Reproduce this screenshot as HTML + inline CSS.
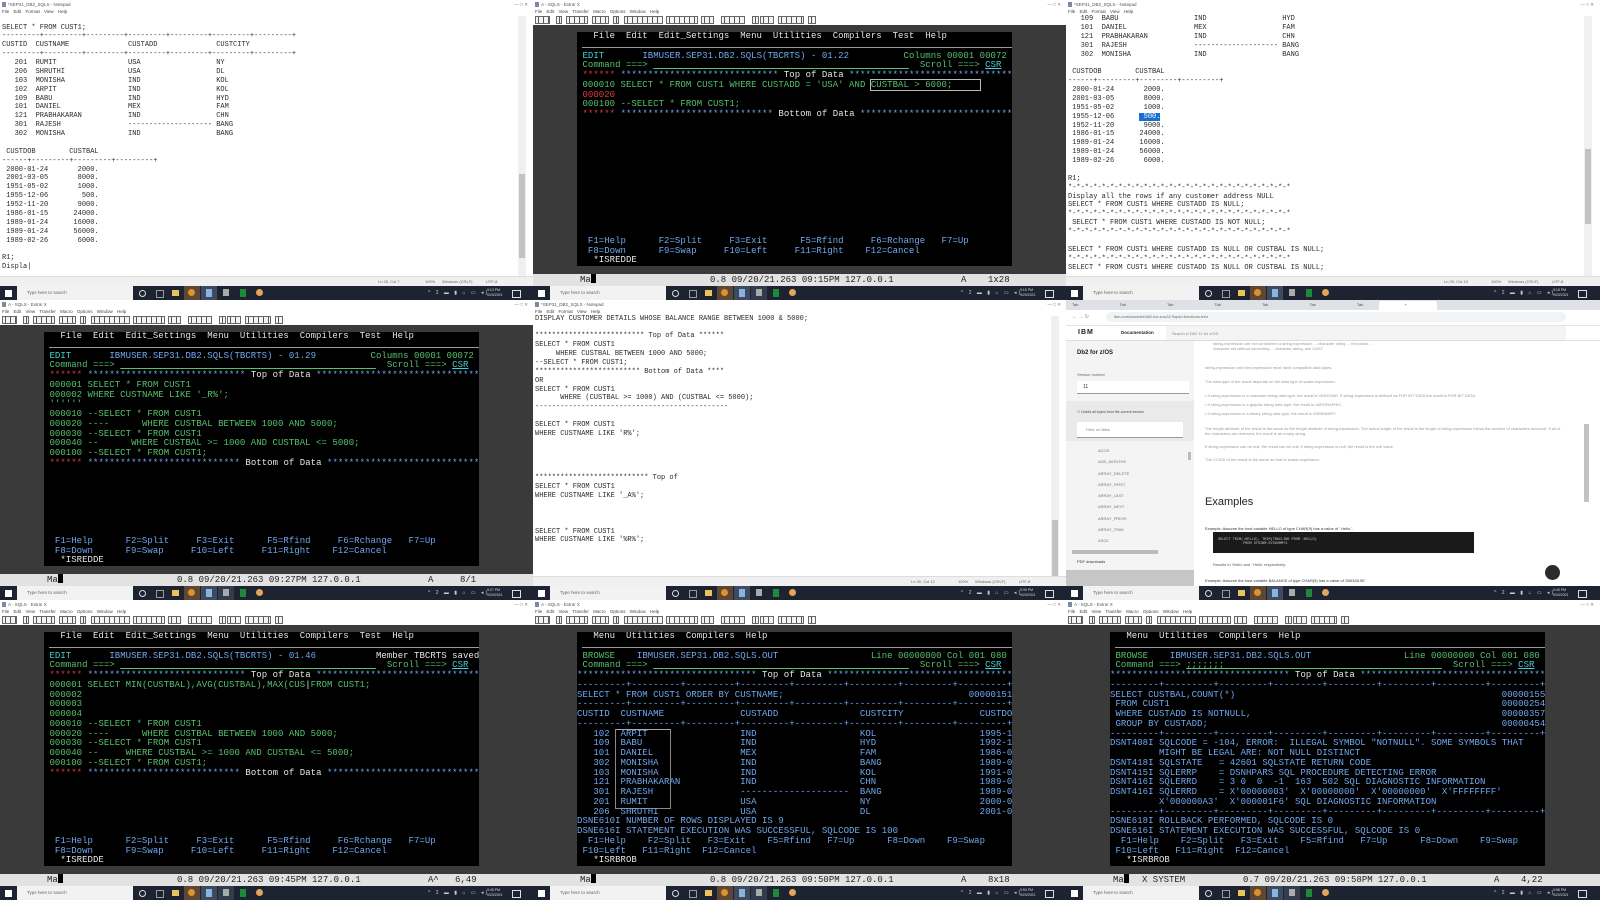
<!DOCTYPE html>
<html><head><meta charset="utf-8">
<style>
body{margin:0;width:1600px;height:899px;overflow:hidden;background:#fff;position:relative;font-family:"Liberation Sans",sans-serif}
.tile{position:absolute;width:534px;height:300px;overflow:hidden;background:#fff}
.ttl{position:absolute;left:0;top:0;width:534px;height:9px;font-size:4.5px;color:#555;line-height:9px;padding-left:8px;box-sizing:border-box}
.ttl:before{content:"";position:absolute;left:2px;top:2px;width:4px;height:5px;background:#7a8aa0}
.ttl:after{content:"\2014      \25A1      \2715";position:absolute;right:6px;top:0;color:#777}
.mnu{position:absolute;top:9px;left:2px;font-size:4.5px;line-height:6px;color:#444;word-spacing:3px}
.tool{position:absolute;top:16px;left:0;width:534px;height:9px}
.tool i{position:absolute;top:0;height:6px;border:1px solid #666;background:repeating-linear-gradient(90deg,#f4f4f4 0 2px,#555 2px 3px,#f4f4f4 3px 5px)}
.gry{position:absolute;top:25px;left:0;width:534px;height:249px;background:#3a3a3a}
.term{position:absolute;left:44px;top:32px;width:435px;height:234px;background:#000}
pre.t{position:absolute;left:44px;top:32px;margin:0;font:9px/9.75px "Liberation Mono",monospace;color:#70a8f0;letter-spacing:.04px;white-space:pre}
.hl{position:absolute;left:49px;top:47px;width:430px;height:1px;background:#9a9a9a}
.g{color:#56c06c}.b{color:#72a8ee}.r{color:#e03a3a}.w{color:#e6e6e6}.c{color:#40d0d0}
.u{text-decoration:underline}
.st{position:absolute;top:274px;left:0;width:534px;height:12px;background:#e2e2e2;font:9px/12px "Liberation Mono",monospace;color:#222}
.st span{position:absolute;top:0}
.cur{display:inline-block;width:5px;height:9px;background:#000;vertical-align:-1px}
.tk{position:absolute;top:286px;left:0;width:534px;height:14px;background:#1d2330}
.tk i{position:absolute;display:block}
.srch{position:absolute;left:17px;top:0;width:116px;height:14px;background:#f2f2f2;font-size:4.5px;line-height:14px;color:#666;padding-left:10px;box-sizing:border-box}
.tray{position:absolute;left:428px;top:0;font-size:5px;line-height:14px;color:#ccc;letter-spacing:2px}
.clk{position:absolute;left:487px;top:2px;font-size:3.5px;line-height:4.5px;color:#ddd}
pre.n{position:absolute;left:2px;margin:0;font:7px/8.88px "Liberation Mono",monospace;color:#2a2a2a;white-space:pre}
.nst{position:absolute;top:276px;left:0;width:534px;height:10px;background:#f0f0f0;border-top:1px solid #ddd;font-size:4px;line-height:10px;color:#666}
.nst span{position:absolute}
.sb{position:absolute;left:518px;top:16px;width:8px;height:260px;background:#f0f0f0}
.sb i{position:absolute;left:1px;width:6px;background:#c2c2c2;display:block}
</style></head><body>

<!-- ================= TILE 1 (notepad) ================= -->
<div class="tile" style="left:0;top:0">
<div class="ttl">*SEP31_DB2_SQLS - Notepad</div>
<div class="mnu">File Edit Format View Help</div>
<pre class="n" style="top:23.5px">SELECT * FROM CUST1;
---------+---------+---------+---------+---------+---------+---------+
CUSTID  CUSTNAME              CUSTADD              CUSTCITY
---------+---------+---------+---------+---------+---------+---------+
   201  RUMIT                 USA                  NY
   206  SHRUTHI               USA                  DL
   103  MONISHA               IND                  KOL
   102  ARPIT                 IND                  KOL
   109  BABU                  IND                  HYD
   101  DANIEL                MEX                  FAM
   121  PRABHAKARAN           IND                  CHN
   301  RAJESH                -------------------- BANG
   302  MONISHA               IND                  BANG

 CUSTDOB        CUSTBAL
------+---------+---------+---------+
 2000-01-24       2000.
 2001-03-05       8000.
 1951-05-02       1000.
 1955-12-06        500.
 1952-11-20       9000.
 1986-01-15      24000.
 1989-01-24      16000.
 1989-01-24      56000.
 1989-02-26       6000.

R1;
Displa|</pre>
<div class="sb"><i style="top:158px;height:84px"></i></div>
<div class="nst"><span style="left:378px">Ln 28, Col 7</span><span style="left:425px">100%</span><span style="left:442px">Windows (CRLF)</span><span style="left:486px">UTF-8</span></div>
<div class="tk"><i style="left:5px;top:4px;width:7px;height:7px;background:#fff"></i><div class="srch">Type here to search</div><i style="left:139px;top:4px;width:5px;height:5px;border:1px solid #ddd;border-radius:50%"></i><i style="left:156px;top:4px;width:6px;height:6px;border:1px solid #999"></i><i style="left:172px;top:4px;width:7px;height:6px;background:#e9c25a"></i><i style="left:184px;top:0;width:16px;height:14px;background:#5c4634"></i><i style="left:188px;top:3px;width:7px;height:7px;border-radius:50%;background:#e0902a"></i><i style="left:201px;top:0;width:16px;height:14px;background:#3d4a60"></i><i style="left:206px;top:3px;width:6px;height:8px;background:#8ab4e0"></i><i style="left:223px;top:3px;width:6px;height:7px;background:#aaa"></i><i style="left:240px;top:3px;width:6px;height:8px;background:#1d8a3a"></i><i style="left:256px;top:3px;width:7px;height:7px;border-radius:50%;background:#e3a55a"></i><span class="tray">^ 2 ▬ ▮ ⌂ ▭ ◂)</span><span class="clk">9:13 PM<br>9/20/2021</span><i style="left:512px;top:4px;width:7px;height:6px;border:1px solid #ddd"></i></div>
</div>

<!-- ================= TILE 2 (EDIT 01.22) ================= -->
<div class="tile" style="left:533px;top:0">
<div class="ttl">A - SQLS - Extra! X</div>
<div class="mnu">File Edit View Transfer Macro Options Window Help</div>
<div class="tool"><i style="left:2px;width:13px"></i><i style="left:23px;width:4px"></i><i style="left:33px;width:20px"></i><i style="left:59px;width:15px"></i><i style="left:80px;width:4px"></i><i style="left:91px;width:37px"></i><i style="left:133px;width:30px"></i><i style="left:168px;width:11px"></i><i style="left:188px;width:22px"></i><i style="left:219px;width:5px"></i><i style="left:227px;width:12px"></i><i style="left:245px;width:24px"></i><i style="left:275px;width:6px"></i></div>
<div class="gry"></div><div class="term"></div><div class="hl"></div>
<pre class="t">   <span class="w">File  Edit  Edit_Settings  Menu  Utilities  Compilers  Test  Help</span>

 <span class="c">EDIT</span>       <span class="b">IBMUSER.SEP31.DB2.SQLS(TBCRTS) - 01.22</span>          <span class="g">Columns 00001 00072</span>
 <span class="g">Command ===></span> <span class="g u">                                               </span>  <span class="g">Scroll ===></span> <span class="c u">CSR</span>
 <span class="r">******</span> <span class="b">*****************************</span> <span class="w">Top of Data</span> <span class="b">******************************</span>
 <span class="g">000010 SELECT * FROM CUST1 WHERE CUSTADD = 'USA' AND </span><span class="g" style="outline:1px solid #bbb">CUSTBAL > 6000;     </span>
 <span class="r">000020</span>
 <span class="g">000100 --SELECT * FROM CUST1;</span>
 <span class="r">******</span> <span class="b">****************************</span> <span class="w">Bottom of Data</span> <span class="b">****************************</span>












  F1=Help      F2=Split     F3=Exit      F5=Rfind     F6=Rchange   F7=Up
  F8=Down      F9=Swap     F10=Left     F11=Right    F12=Cancel
   <span class="w">*ISREDDE</span></pre>
<div class="st"><span style="left:47px">Ma<span class="cur"></span></span><span style="left:177px">0.8 09/20/21.263 09:15PM 127.0.0.1</span><span style="left:428px">A</span><span style="left:455px">1x28</span></div>
<div class="tk"><i style="left:5px;top:4px;width:7px;height:7px;background:#fff"></i><div class="srch">Type here to search</div><i style="left:139px;top:4px;width:5px;height:5px;border:1px solid #ddd;border-radius:50%"></i><i style="left:156px;top:4px;width:6px;height:6px;border:1px solid #999"></i><i style="left:172px;top:4px;width:7px;height:6px;background:#e9c25a"></i><i style="left:184px;top:0;width:16px;height:14px;background:#5c4634"></i><i style="left:188px;top:3px;width:7px;height:7px;border-radius:50%;background:#e0902a"></i><i style="left:201px;top:0;width:16px;height:14px;background:#3d4a60"></i><i style="left:206px;top:3px;width:6px;height:8px;background:#8ab4e0"></i><i style="left:218px;top:0;width:16px;height:14px;background:#333c4c"></i><i style="left:223px;top:3px;width:6px;height:7px;background:#aaa"></i><i style="left:240px;top:3px;width:6px;height:8px;background:#1d8a3a"></i><i style="left:256px;top:3px;width:7px;height:7px;border-radius:50%;background:#e3a55a"></i><span class="tray">^ 2 ▬ ▮ ⌂ ▭ ◂)</span><span class="clk">9:15 PM<br>9/20/2021</span><i style="left:512px;top:4px;width:7px;height:6px;border:1px solid #ddd"></i></div>
</div>

<!-- ================= TILE 3 (notepad) ================= -->
<div class="tile" style="left:1066px;top:0">
<div class="ttl">*SEP31_DB2_SQLS - Notepad</div>
<div class="mnu">File Edit Format View Help</div>
<pre class="n" style="top:15px">   109  BABU                  IND                  HYD
   101  DANIEL                MEX                  FAM
   121  PRABHAKARAN           IND                  CHN
   301  RAJESH                -------------------- BANG
   302  MONISHA               IND                  BANG

 CUSTDOB        CUSTBAL
------+---------+---------+---------+
 2000-01-24       2000.
 2001-03-05       8000.
 1951-05-02       1000.
 1955-12-06      <span style="background:#1a6fd0;color:#fff"> 500.</span>
 1952-11-20       9000.
 1986-01-15      24000.
 1989-01-24      16000.
 1989-01-24      56000.
 1989-02-26       6000.

R1;
*-*-*-*-*-*-*-*-*-*-*-*-*-*-*-*-*-*-*-*-*-*-*-*-*-*-*
Display all the rows if any customer address NULL
SELECT * FROM CUST1 WHERE CUSTADD IS NULL;
*-*-*-*-*-*-*-*-*-*-*-*-*-*-*-*-*-*-*-*-*-*-*-*-*-*-*
 SELECT * FROM CUST1 WHERE CUSTADD IS NOT NULL;
*-*-*-*-*-*-*-*-*-*-*-*-*-*-*-*-*-*-*-*-*-*-*-*-*-*-*

SELECT * FROM CUST1 WHERE CUSTADD IS NULL OR CUSTBAL IS NULL;
*-*-*-*-*-*-*-*-*-*-*-*-*-*-*-*-*-*-*-*-*-*-*-*-*-*-*
SELECT * FROM CUST1 WHERE CUSTADD IS NULL OR CUSTBAL IS NULL;</pre>
<div class="sb"><i style="top:133px;height:75px"></i></div>
<div class="nst"><span style="left:378px">Ln 29, Col 19</span><span style="left:425px">100%</span><span style="left:442px">Windows (CRLF)</span><span style="left:486px">UTF-8</span></div>
<div class="tk"><i style="left:5px;top:4px;width:7px;height:7px;background:#fff"></i><div class="srch">Type here to search</div><i style="left:139px;top:4px;width:5px;height:5px;border:1px solid #ddd;border-radius:50%"></i><i style="left:156px;top:4px;width:6px;height:6px;border:1px solid #999"></i><i style="left:172px;top:4px;width:7px;height:6px;background:#e9c25a"></i><i style="left:184px;top:0;width:16px;height:14px;background:#5c4634"></i><i style="left:188px;top:3px;width:7px;height:7px;border-radius:50%;background:#e0902a"></i><i style="left:201px;top:0;width:16px;height:14px;background:#3d4a60"></i><i style="left:206px;top:3px;width:6px;height:8px;background:#8ab4e0"></i><i style="left:223px;top:3px;width:6px;height:7px;background:#aaa"></i><i style="left:240px;top:3px;width:6px;height:8px;background:#1d8a3a"></i><i style="left:256px;top:3px;width:7px;height:7px;border-radius:50%;background:#e3a55a"></i><span class="tray">^ 2 ▬ ▮ ⌂ ▭ ◂)</span><span class="clk">9:18 PM<br>9/20/2021</span><i style="left:512px;top:4px;width:7px;height:6px;border:1px solid #ddd"></i></div>
</div>

<!-- ================= TILE 4 (EDIT 01.29) ================= -->
<div class="tile" style="left:0;top:300px">
<div class="ttl">A - SQLS - Extra! X</div>
<div class="mnu">File Edit View Transfer Macro Options Window Help</div>
<div class="tool"><i style="left:2px;width:13px"></i><i style="left:23px;width:4px"></i><i style="left:33px;width:20px"></i><i style="left:59px;width:15px"></i><i style="left:80px;width:4px"></i><i style="left:91px;width:37px"></i><i style="left:133px;width:30px"></i><i style="left:168px;width:11px"></i><i style="left:188px;width:22px"></i><i style="left:219px;width:5px"></i><i style="left:227px;width:12px"></i><i style="left:245px;width:24px"></i><i style="left:275px;width:6px"></i></div>
<div class="gry"></div><div class="term"></div><div class="hl"></div>
<pre class="t">   <span class="w">File  Edit  Edit_Settings  Menu  Utilities  Compilers  Test  Help</span>

 <span class="c">EDIT</span>       <span class="b">IBMUSER.SEP31.DB2.SQLS(TBCRTS) - 01.29</span>          <span class="g">Columns 00001 00072</span>
 <span class="g">Command ===></span> <span class="g u">                                               </span>  <span class="g">Scroll ===></span> <span class="c u">CSR</span>
 <span class="r">******</span> <span class="b">*****************************</span> <span class="w">Top of Data</span> <span class="b">******************************</span>
 <span class="g">000001 SELECT * FROM CUST1</span>
 <span class="g">000002 WHERE CUSTNAME LIKE '_R%';</span>
 <span class="g">''''''</span>
 <span class="g">000010 --SELECT * FROM CUST1</span>
 <span class="g">000020 ----      WHERE CUSTBAL BETWEEN 1000 AND 5000;</span>
 <span class="g">000030 --SELECT * FROM CUST1</span>
 <span class="g">000040 --      WHERE CUSTBAL >= 1000 AND CUSTBAL <= 5000;</span>
 <span class="g">000100 --SELECT * FROM CUST1;</span>
 <span class="r">******</span> <span class="b">****************************</span> <span class="w">Bottom of Data</span> <span class="b">****************************</span>







  F1=Help      F2=Split     F3=Exit      F5=Rfind     F6=Rchange   F7=Up
  F8=Down      F9=Swap     F10=Left     F11=Right    F12=Cancel
   <span class="w">*ISREDDE</span></pre>
<div class="st"><span style="left:47px">Ma<span class="cur"></span></span><span style="left:177px">0.8 09/20/21.263 09:27PM 127.0.0.1</span><span style="left:428px">A</span><span style="left:460px">8/1</span></div>
<div class="tk"><i style="left:5px;top:4px;width:7px;height:7px;background:#fff"></i><div class="srch">Type here to search</div><i style="left:139px;top:4px;width:5px;height:5px;border:1px solid #ddd;border-radius:50%"></i><i style="left:156px;top:4px;width:6px;height:6px;border:1px solid #999"></i><i style="left:172px;top:4px;width:7px;height:6px;background:#e9c25a"></i><i style="left:184px;top:0;width:16px;height:14px;background:#5c4634"></i><i style="left:188px;top:3px;width:7px;height:7px;border-radius:50%;background:#e0902a"></i><i style="left:201px;top:0;width:16px;height:14px;background:#3d4a60"></i><i style="left:206px;top:3px;width:6px;height:8px;background:#8ab4e0"></i><i style="left:218px;top:0;width:16px;height:14px;background:#333c4c"></i><i style="left:223px;top:3px;width:6px;height:7px;background:#aaa"></i><i style="left:240px;top:3px;width:6px;height:8px;background:#1d8a3a"></i><i style="left:256px;top:3px;width:7px;height:7px;border-radius:50%;background:#e3a55a"></i><span class="tray">^ 2 ▬ ▮ ⌂ ▭ ◂)</span><span class="clk">9:27 PM<br>9/20/2021</span><i style="left:512px;top:4px;width:7px;height:6px;border:1px solid #ddd"></i></div>
</div>

<!-- ================= TILE 5 (notepad) ================= -->
<div class="tile" style="left:533px;top:300px">
<div class="ttl">*SEP31_DB2_SQLS - Notepad</div>
<div class="mnu">File Edit Format View Help</div>
<pre class="n" style="top:14.5px">DISPLAY CUSTOMER DETAILS WHOSE BALANCE RANGE BETWEEN 1000 &amp; 5000;

************************** Top of Data ******
SELECT * FROM CUST1
     WHERE CUSTBAL BETWEEN 1000 AND 5000;
--SELECT * FROM CUST1;
************************* Bottom of Data ****
OR
SELECT * FROM CUST1
      WHERE (CUSTBAL >= 1000) AND (CUSTBAL <= 5000);
----------------------------------------------

SELECT * FROM CUST1
WHERE CUSTNAME LIKE 'R%';




*************************** Top of
SELECT * FROM CUST1
WHERE CUSTNAME LIKE '_A%';



SELECT * FROM CUST1
WHERE CUSTNAME LIKE '%R%';</pre>
<div class="sb"><i style="top:204px;height:68px"></i></div>
<div class="nst"><span style="left:378px">Ln 30, Col 12</span><span style="left:425px">100%</span><span style="left:442px">Windows (CRLF)</span><span style="left:486px">UTF-8</span></div>
<div class="tk"><i style="left:5px;top:4px;width:7px;height:7px;background:#fff"></i><div class="srch">Type here to search</div><i style="left:139px;top:4px;width:5px;height:5px;border:1px solid #ddd;border-radius:50%"></i><i style="left:156px;top:4px;width:6px;height:6px;border:1px solid #999"></i><i style="left:172px;top:4px;width:7px;height:6px;background:#e9c25a"></i><i style="left:184px;top:0;width:16px;height:14px;background:#5c4634"></i><i style="left:188px;top:3px;width:7px;height:7px;border-radius:50%;background:#e0902a"></i><i style="left:201px;top:0;width:16px;height:14px;background:#3d4a60"></i><i style="left:206px;top:3px;width:6px;height:8px;background:#8ab4e0"></i><i style="left:223px;top:3px;width:6px;height:7px;background:#aaa"></i><i style="left:240px;top:3px;width:6px;height:8px;background:#1d8a3a"></i><i style="left:256px;top:3px;width:7px;height:7px;border-radius:50%;background:#e3a55a"></i><span class="tray">^ 2 ▬ ▮ ⌂ ▭ ◂)</span><span class="clk">9:30 PM<br>9/20/2021</span><i style="left:512px;top:4px;width:7px;height:6px;border:1px solid #ddd"></i></div>
</div>

<!-- ================= TILE 6 (browser) ================= -->
<div class="tile" style="left:1066px;top:300px;font-size:5px;color:#666">
<div style="position:absolute;left:0;top:0;width:534px;height:10px;background:#dee1e6"></div>
<div style="position:absolute;left:313px;top:1px;width:58px;height:9px;background:#fff;border-radius:2px 2px 0 0"></div>
<div style="position:absolute;left:6px;top:2px;font-size:4px;color:#555;word-spacing:40px;white-space:nowrap">Tab Tab Tab Tab Tab Tab Tab +</div>
<div style="position:absolute;left:0;top:10px;width:534px;height:15px;background:#fff;border-bottom:1px solid #e4e4e4"></div>
<div style="position:absolute;left:6px;top:14px;font-size:5px;color:#777">&#8592; &#8594; &#8635;</div>
<div style="position:absolute;left:40px;top:12px;width:460px;height:10px;background:#f1f3f4;border-radius:5px"></div>
<div style="position:absolute;left:48px;top:14px;font-size:4px;color:#666">ibm.com/docs/en/db2-for-zos/11?topic=functions-trim</div>
<div style="position:absolute;left:0;top:26px;width:534px;height:14px;background:#fff;border-bottom:1px solid #ddd"></div>
<div style="position:absolute;left:12px;top:28px;font:bold 7px/9px 'Liberation Sans',sans-serif;color:#222;letter-spacing:1px">IBM</div>
<div style="position:absolute;left:55px;top:30px;font:bold 4.5px 'Liberation Sans',sans-serif;color:#222">Documentation</div>
<div style="position:absolute;left:100px;top:26px;width:400px;height:14px;background:#f4f4f4"></div>
<div style="position:absolute;left:106px;top:31px;font-size:4px;color:#888">Search in Db2 11 for z/OS</div>
<div style="position:absolute;left:0;top:41px;width:128px;height:245px;background:#f4f4f4"></div>
<div style="position:absolute;left:11px;top:50px;font:bold 6px 'Liberation Sans',sans-serif;color:#222">Db2 for z/OS</div>
<div style="position:absolute;left:11px;top:72px;font-size:4px">Version number</div>
<div style="position:absolute;left:11px;top:81px;width:112px;height:12px;background:#fff;border-bottom:1px solid #999"></div>
<div style="position:absolute;left:17px;top:84px;font-size:5px;color:#333">11</div>
<div style="position:absolute;left:0;top:101px;width:128px;height:40px;background:#eaeaea"></div>
<div style="position:absolute;left:11px;top:110px;font-size:3.5px;color:#444">&#9744; Unfold all topics from the current version</div>
<div style="position:absolute;left:11px;top:122px;width:106px;height:15px;background:#fff;border-bottom:1px solid #999"></div>
<div style="position:absolute;left:20px;top:127px;font-size:4px;color:#888">Filter on titles</div>
<div style="position:absolute;left:32px;top:145px;font-size:4px;line-height:11.3px;color:#777">ACOS<br>ADD_MONTHS<br>ARRAY_DELETE<br>ARRAY_FIRST<br>ARRAY_LAST<br>ARRAY_NEXT<br>ARRAY_PRIOR<br>ARRAY_TRIM<br>ASCII</div>
<div style="position:absolute;left:122px;top:152px;width:3px;height:8px;background:#bbb"></div>
<div style="position:absolute;left:6px;top:250px;width:86px;height:4px;background:#bbb"></div>
<div style="position:absolute;left:11px;top:259px;font-size:4px;color:#333">PDF downloads</div>
<div style="position:absolute;left:0;top:270px;width:128px;height:16px;background:#c6c6c6"></div>
<div style="position:absolute;left:139px;top:41px;width:360px;font-size:4px;line-height:5px;color:#999">
<div style="margin-left:8px">string-expression are not considered a string expression ... character string ... if function ...</div>
<div style="margin-left:8px">character set without converting ... character string, see CAST</div>
<div style="margin-top:14px">string-expression and trim-expression must have compatible data types.</div>
<div style="margin-top:9px">The data type of the result depends on the data type of scalar expression:</div>
<div style="margin-top:9px">&bull; If string-expression is a character string data type, the result is VARCHAR. If string-expression is defined as FOR BIT DATA the result is FOR BIT DATA.</div>
<div style="margin-top:4px">&bull; If string-expression is a graphic string data type, the result is VARGRAPHIC.</div>
<div style="margin-top:4px">&bull; If string-expression is a binary string data type, the result is VARBINARY.</div>
<div style="margin-top:10px">The length attribute of the result is the same as the length attribute of string-expression. The actual length of the result is the length of string-expression minus the number of characters removed. If all of the characters are removed, the result is an empty string.</div>
<div style="margin-top:8px">If string-expression can be null, the result can be null; if string-expression is null, the result is the null value.</div>
<div style="margin-top:8px">The CCSID of the result is the same as that of scalar expression.</div>
</div>
<div style="position:absolute;left:139px;top:196px;font-size:11px;color:#222">Examples</div>
<div style="position:absolute;left:139px;top:226px;font-size:4px;color:#333">Example: Assume the host variable HELLO of type CHAR(9) has a value of ' Hello '.</div>
<div style="position:absolute;left:147px;top:232px;width:261px;height:21px;background:#1a1a1a"></div>
<div style="position:absolute;left:152px;top:238px;font:3.5px/4px 'Liberation Mono',monospace;color:#ccc;white-space:pre">SELECT TRIM(:HELLO), TRIM(TRAILING FROM :HELLO)
            FROM SYSIBM.SYSDUMMY1</div>
<div style="position:absolute;left:147px;top:262px;font-size:4px;color:#555">Results in 'Hello' and ' Hello' respectively.</div>
<div style="position:absolute;left:139px;top:278px;font-size:4px;color:#333">Example: Assume the host variable BALANCE of type CHAR(9) has a value of '000345.50'</div>
<div style="position:absolute;left:479px;top:265px;width:15px;height:15px;border-radius:50%;background:#2b2b2b"></div>
<div style="position:absolute;left:518px;top:124px;width:5px;height:78px;background:#c2c2c2"></div>
<div class="tk"><i style="left:5px;top:4px;width:7px;height:7px;background:#fff"></i><div class="srch">Type here to search</div><i style="left:139px;top:4px;width:5px;height:5px;border:1px solid #ddd;border-radius:50%"></i><i style="left:156px;top:4px;width:6px;height:6px;border:1px solid #999"></i><i style="left:172px;top:4px;width:7px;height:6px;background:#e9c25a"></i><i style="left:184px;top:0;width:16px;height:14px;background:#5c4634"></i><i style="left:188px;top:3px;width:7px;height:7px;border-radius:50%;background:#e0902a"></i><i style="left:201px;top:0;width:16px;height:14px;background:#3d4a60"></i><i style="left:206px;top:3px;width:6px;height:8px;background:#8ab4e0"></i><i style="left:223px;top:3px;width:6px;height:7px;background:#aaa"></i><i style="left:240px;top:3px;width:6px;height:8px;background:#1d8a3a"></i><i style="left:256px;top:3px;width:7px;height:7px;border-radius:50%;background:#e3a55a"></i><span class="tray">^ 2 ▬ ▮ ⌂ ▭ ◂)</span><span class="clk">9:40 PM<br>9/20/2021</span><i style="left:512px;top:4px;width:7px;height:6px;border:1px solid #ddd"></i></div>
</div>

<!-- ================= TILE 7 (EDIT 01.46) ================= -->
<div class="tile" style="left:0;top:600px">
<div class="ttl">A - SQLS - Extra! X</div>
<div class="mnu">File Edit View Transfer Macro Options Window Help</div>
<div class="tool"><i style="left:2px;width:13px"></i><i style="left:23px;width:4px"></i><i style="left:33px;width:20px"></i><i style="left:59px;width:15px"></i><i style="left:80px;width:4px"></i><i style="left:91px;width:37px"></i><i style="left:133px;width:30px"></i><i style="left:168px;width:11px"></i><i style="left:188px;width:22px"></i><i style="left:219px;width:5px"></i><i style="left:227px;width:12px"></i><i style="left:245px;width:24px"></i><i style="left:275px;width:6px"></i></div>
<div class="gry"></div><div class="term"></div><div class="hl"></div>
<pre class="t">   <span class="w">File  Edit  Edit_Settings  Menu  Utilities  Compilers  Test  Help</span>

 <span class="c">EDIT</span>       <span class="b">IBMUSER.SEP31.DB2.SQLS(TBCRTS) - 01.46</span>           <span class="w">Member TBCRTS saved</span>
 <span class="g">Command ===></span> <span class="g u">                                               </span>  <span class="g">Scroll ===></span> <span class="c u">CSR</span>
 <span class="r">******</span> <span class="b">*****************************</span> <span class="w">Top of Data</span> <span class="b">******************************</span>
 <span class="g">000001 SELECT MIN(CUSTBAL),AVG(CUSTBAL),MAX(CUS</span><span class="w">|</span><span class="g">FROM CUST1;</span>
 <span class="g">000002</span>
 <span class="g">000003</span>
 <span class="g">000004</span>
 <span class="g">000010 --SELECT * FROM CUST1</span>
 <span class="g">000020 ----      WHERE CUSTBAL BETWEEN 1000 AND 5000;</span>
 <span class="g">000030 --SELECT * FROM CUST1</span>
 <span class="g">000040 --     WHERE CUSTBAL >= 1000 AND CUSTBAL <= 5000;</span>
 <span class="g">000100 --SELECT * FROM CUST1;</span>
 <span class="r">******</span> <span class="b">****************************</span> <span class="w">Bottom of Data</span> <span class="b">****************************</span>






  F1=Help      F2=Split     F3=Exit      F5=Rfind     F6=Rchange   F7=Up
  F8=Down      F9=Swap     F10=Left     F11=Right    F12=Cancel
   <span class="w">*ISREDDE</span></pre>
<div class="st"><span style="left:47px">Ma<span class="cur"></span></span><span style="left:177px">0.8 09/20/21.263 09:45PM 127.0.0.1</span><span style="left:428px">A^</span><span style="left:455px">6,49</span></div>
<div class="tk"><i style="left:5px;top:4px;width:7px;height:7px;background:#fff"></i><div class="srch">Type here to search</div><i style="left:139px;top:4px;width:5px;height:5px;border:1px solid #ddd;border-radius:50%"></i><i style="left:156px;top:4px;width:6px;height:6px;border:1px solid #999"></i><i style="left:172px;top:4px;width:7px;height:6px;background:#e9c25a"></i><i style="left:184px;top:0;width:16px;height:14px;background:#5c4634"></i><i style="left:188px;top:3px;width:7px;height:7px;border-radius:50%;background:#e0902a"></i><i style="left:201px;top:0;width:16px;height:14px;background:#3d4a60"></i><i style="left:206px;top:3px;width:6px;height:8px;background:#8ab4e0"></i><i style="left:218px;top:0;width:16px;height:14px;background:#333c4c"></i><i style="left:223px;top:3px;width:6px;height:7px;background:#aaa"></i><i style="left:240px;top:3px;width:6px;height:8px;background:#1d8a3a"></i><i style="left:256px;top:3px;width:7px;height:7px;border-radius:50%;background:#e3a55a"></i><span class="tray">^ 2 ▬ ▮ ⌂ ▭ ◂)</span><span class="clk">9:45 PM<br>9/20/2021</span><i style="left:512px;top:4px;width:7px;height:6px;border:1px solid #ddd"></i></div>
</div>

<!-- ================= TILE 8 (BROWSE rows) ================= -->
<div class="tile" style="left:533px;top:600px">
<div class="ttl">A - SQLS - Extra! X</div>
<div class="mnu">File Edit View Transfer Macro Options Window Help</div>
<div class="tool"><i style="left:2px;width:13px"></i><i style="left:23px;width:4px"></i><i style="left:33px;width:20px"></i><i style="left:59px;width:15px"></i><i style="left:80px;width:4px"></i><i style="left:91px;width:37px"></i><i style="left:133px;width:30px"></i><i style="left:168px;width:11px"></i><i style="left:188px;width:22px"></i><i style="left:219px;width:5px"></i><i style="left:227px;width:12px"></i><i style="left:245px;width:24px"></i><i style="left:275px;width:6px"></i></div>
<div class="gry"></div><div class="term"></div><div class="hl"></div>
<div style="position:absolute;left:82px;top:129px;width:54px;height:78px;border:1px solid #888;border-top-color:#aaa"></div>
<pre class="t">   <span class="w">Menu  Utilities  Compilers  Help</span>

 <span class="g">BROWSE</span>    <span class="b">IBMUSER.SEP31.DB2.SQLS.OUT</span>                 <span class="g">Line 00000000 Col 001 080</span>
 <span class="g">Command ===></span> <span class="g u">                                               </span>  <span class="g">Scroll ===></span> <span class="c u">CSR</span>
********************************* <span class="w">Top of Data</span> **********************************
---------+---------+---------+---------+---------+---------+---------+---------+
SELECT * FROM CUST1 ORDER BY CUSTNAME;                                  00000151
---------+---------+---------+---------+---------+---------+---------+---------+
CUSTID  CUSTNAME              CUSTADD               CUSTCITY              CUSTDO
---------+---------+---------+---------+---------+---------+---------+---------+
   102  ARPIT                 IND                   KOL                   1995-1
   109  BABU                  IND                   HYD                   1992-1
   101  DANIEL                MEX                   FAM                   1986-0
   302  MONISHA               IND                   BANG                  1989-0
   103  MONISHA               IND                   KOL                   1991-0
   121  PRABHAKARAN           IND                   CHN                   1989-0
   301  RAJESH                --------------------  BANG                  1989-0
   201  RUMIT                 USA                   NY                    2000-0
   206  SHRUTHI               USA                   DL                    2001-0
DSNE610I NUMBER OF ROWS DISPLAYED IS 9
DSNE616I STATEMENT EXECUTION WAS SUCCESSFUL, SQLCODE IS 100
  F1=Help    F2=Split   F3=Exit    F5=Rfind   F7=Up      F8=Down    F9=Swap
 F10=Left   F11=Right  F12=Cancel
   <span class="w">*ISRBROB</span></pre>
<div class="st"><span style="left:47px">Ma<span class="cur"></span></span><span style="left:177px">0.8 09/20/21.263 09:50PM 127.0.0.1</span><span style="left:428px">A</span><span style="left:455px">8x18</span></div>
<div class="tk"><i style="left:5px;top:4px;width:7px;height:7px;background:#fff"></i><div class="srch">Type here to search</div><i style="left:139px;top:4px;width:5px;height:5px;border:1px solid #ddd;border-radius:50%"></i><i style="left:156px;top:4px;width:6px;height:6px;border:1px solid #999"></i><i style="left:172px;top:4px;width:7px;height:6px;background:#e9c25a"></i><i style="left:184px;top:0;width:16px;height:14px;background:#5c4634"></i><i style="left:188px;top:3px;width:7px;height:7px;border-radius:50%;background:#e0902a"></i><i style="left:201px;top:0;width:16px;height:14px;background:#3d4a60"></i><i style="left:206px;top:3px;width:6px;height:8px;background:#8ab4e0"></i><i style="left:218px;top:0;width:16px;height:14px;background:#333c4c"></i><i style="left:223px;top:3px;width:6px;height:7px;background:#aaa"></i><i style="left:240px;top:3px;width:6px;height:8px;background:#1d8a3a"></i><i style="left:256px;top:3px;width:7px;height:7px;border-radius:50%;background:#e3a55a"></i><span class="tray">^ 2 ▬ ▮ ⌂ ▭ ◂)</span><span class="clk">9:50 PM<br>9/20/2021</span><i style="left:512px;top:4px;width:7px;height:6px;border:1px solid #ddd"></i></div>
</div>

<!-- ================= TILE 9 (BROWSE error) ================= -->
<div class="tile" style="left:1066px;top:600px">
<div class="ttl">A - SQLS - Extra! X</div>
<div class="mnu">File Edit View Transfer Macro Options Window Help</div>
<div class="tool"><i style="left:2px;width:13px"></i><i style="left:23px;width:4px"></i><i style="left:33px;width:20px"></i><i style="left:59px;width:15px"></i><i style="left:80px;width:4px"></i><i style="left:91px;width:37px"></i><i style="left:133px;width:30px"></i><i style="left:168px;width:11px"></i><i style="left:188px;width:22px"></i><i style="left:219px;width:5px"></i><i style="left:227px;width:12px"></i><i style="left:245px;width:24px"></i><i style="left:275px;width:6px"></i></div>
<div class="gry"></div><div class="term"></div><div class="hl"></div>
<pre class="t">   <span class="w">Menu  Utilities  Compilers  Help</span>

 <span class="g">BROWSE</span>    <span class="b">IBMUSER.SEP31.DB2.SQLS.OUT</span>                 <span class="g">Line 00000000 Col 001 080</span>
 <span class="g">Command ===></span> <span class="g u">;;;;;;;                                        </span>  <span class="g">Scroll ===></span> <span class="c u">CSR</span>
********************************* <span class="w">Top of Data</span> **********************************
---------+---------+---------+---------+---------+---------+---------+---------+
SELECT CUSTBAL,COUNT(*)                                                 00000155
 FROM CUST1                                                             00000254
 WHERE CUSTADD IS NOTNULL,                                              00000357
 GROUP BY CUSTADD;                                                      00000454
---------+---------+---------+---------+---------+---------+---------+---------+
DSNT408I SQLCODE = -104, ERROR:  ILLEGAL SYMBOL "NOTNULL". SOME SYMBOLS THAT
         MIGHT BE LEGAL ARE: NOT NULL DISTINCT
DSNT418I SQLSTATE   = 42601 SQLSTATE RETURN CODE
DSNT415I SQLERRP    = DSNHPARS SQL PROCEDURE DETECTING ERROR
DSNT416I SQLERRD    = 3 0  0  -1  163  502 SQL DIAGNOSTIC INFORMATION
DSNT416I SQLERRD    = X'00000003'  X'00000000'  X'00000000'  X'FFFFFFFF'
         X'000000A3'  X'000001F6' SQL DIAGNOSTIC INFORMATION
---------+---------+---------+---------+---------+---------+---------+---------+
DSNE618I ROLLBACK PERFORMED, SQLCODE IS 0
DSNE616I STATEMENT EXECUTION WAS SUCCESSFUL, SQLCODE IS 0
  F1=Help    F2=Split   F3=Exit    F5=Rfind   F7=Up      F8=Down    F9=Swap
 F10=Left   F11=Right  F12=Cancel
   <span class="w">*ISRBROB</span></pre>
<div class="st"><span style="left:47px">Ma<span class="cur"></span></span><span style="left:76px">X SYSTEM</span><span style="left:177px">0.7 09/20/21.263 09:58PM 127.0.0.1</span><span style="left:428px">A</span><span style="left:455px">4,22</span></div>
<div class="tk"><i style="left:5px;top:4px;width:7px;height:7px;background:#fff"></i><div class="srch">Type here to search</div><i style="left:139px;top:4px;width:5px;height:5px;border:1px solid #ddd;border-radius:50%"></i><i style="left:156px;top:4px;width:6px;height:6px;border:1px solid #999"></i><i style="left:172px;top:4px;width:7px;height:6px;background:#e9c25a"></i><i style="left:184px;top:0;width:16px;height:14px;background:#5c4634"></i><i style="left:188px;top:3px;width:7px;height:7px;border-radius:50%;background:#e0902a"></i><i style="left:201px;top:0;width:16px;height:14px;background:#3d4a60"></i><i style="left:206px;top:3px;width:6px;height:8px;background:#8ab4e0"></i><i style="left:218px;top:0;width:16px;height:14px;background:#333c4c"></i><i style="left:223px;top:3px;width:6px;height:7px;background:#aaa"></i><i style="left:240px;top:3px;width:6px;height:8px;background:#1d8a3a"></i><i style="left:256px;top:3px;width:7px;height:7px;border-radius:50%;background:#e3a55a"></i><span class="tray">^ 2 ▬ ▮ ⌂ ▭ ◂)</span><span class="clk">9:58 PM<br>9/20/2021</span><i style="left:512px;top:4px;width:7px;height:6px;border:1px solid #ddd"></i></div>
</div>

</body></html>
